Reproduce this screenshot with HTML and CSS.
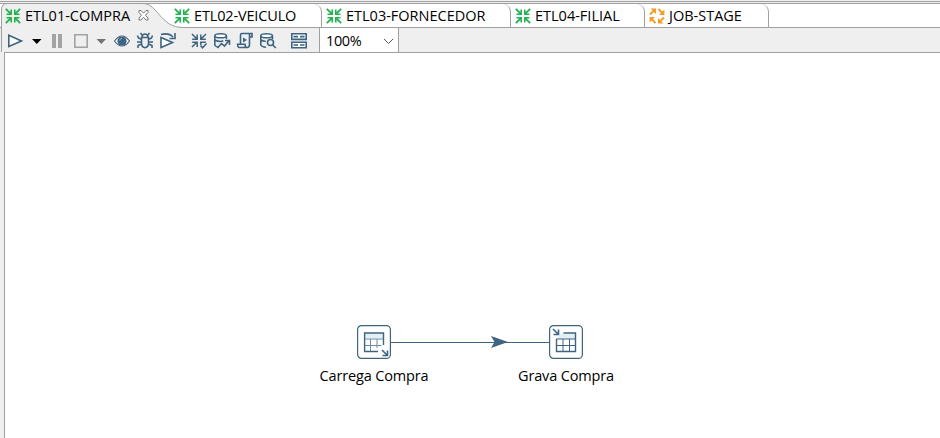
FILE: index.html
```html
<!DOCTYPE html>
<html lang="pt">
<head>
<meta charset="utf-8">
<title>ETL01-COMPRA</title>
<link rel="stylesheet" href="styles.css">
</head>
<body>
<svg class="defs" width="0" height="0">
  <symbol id="transf" viewBox="0 0 16 16">
    <g id="quad"><path d="M.8 .8L5 5" fill="none" stroke="currentColor" stroke-width="1.800"/><path d="M7 1.500V7H1.500V5.400H4L5.400 4V1.500z" fill="currentColor"/></g>
    <use href="#quad" transform="matrix(-1 0 0 1 16 0)"/>
    <use href="#quad" transform="matrix(1 0 0 -1 0 16)"/>
    <use href="#quad" transform="matrix(-1 0 0 -1 16 16)"/>
  </symbol>
  <symbol id="job" viewBox="0 0 16 16">
    <g id="arr"><path d="M1 6.500L5 2.500" fill="none" stroke="currentColor" stroke-width="1.800"/><path d="M1.500 .6H7v5.400L5.200 4.200 3.300 2.300z" fill="currentColor"/></g>
    <use href="#arr" transform="rotate(90 8 8)"/>
    <use href="#arr" transform="rotate(180 8 8)"/>
    <use href="#arr" transform="rotate(270 8 8)"/>
  </symbol>
</svg>
<div class="app">
  <nav class="tabs">
    <div class="tab active">
      <svg class="curve" width="190" height="25" viewBox="0 0 190 25">
        <path d="M1 25V7Q1 .5 7 .5H143C158 .5 160 24.500 183 24.500H190V25z" fill="#efefef"/>
        <path d="M1.500 25V7Q1.500 .5 7 .5H143C158 .5 160 24.500 183 24.500H190" fill="none" stroke="#a0a0a0"/>
      </svg>
      <svg class="ic green"><use href="#transf"/></svg><span class="t1">ETL01-COMPRA</span>
      <svg class="close" width="11" height="11" viewBox="0 0 11 11"><path d="M1 .5h2l2.500 2.700L8 .5h2v2L7.500 5.200 10 8v2H8L5.500 7.300 3 10H1V8l2.500-2.800L1 2.500z" fill="#fff" stroke="#666" stroke-width=".9"/></svg>
    </div>
    <div class="tab w2"><svg class="ic green"><use href="#transf"/></svg><span class="t2">ETL02-VEICULO</span></div>
    <div class="tab w3"><svg class="ic green"><use href="#transf"/></svg><span class="t3">ETL03-FORNECEDOR</span></div>
    <div class="tab w4"><svg class="ic green"><use href="#transf"/></svg><span class="t4">ETL04-FILIAL</span></div>
    <div class="tab w5"><svg class="ic orange"><use href="#job"/></svg><span class="t5">JOB-STAGE</span></div>
  </nav>
  <div class="toolbar">
    <svg class="tools" width="312" height="24" viewBox="0 0 312 24" fill="none" stroke="#3d6480" stroke-width="1.600">
      <path d="M8.800 7.200v11.400L21.500 12.900z" fill="#fff"/>
      <path d="M32 11h9.500l-4.700 5z" fill="#000" stroke="none"/>
      <path d="M52 6h4v14h-4zM58 6h4v14h-4z" fill="#a3a3a3" stroke="none"/>
      <path d="M74.800 6.800h12.400v12.400H74.800z" stroke="#a3a3a3"/>
      <path d="M96.500 11h9.500l-4.700 5z" fill="#737373" stroke="none"/>
      <path d="M114.500 13q7.500-10 15 0-7.500 10-15 0z" fill="#fff" stroke-width="1.200"/>
      <circle cx="122" cy="13" r="4.600" fill="#3d6480" stroke="none"/><path d="M119.700 12.500q.3-2 2.300-2.300" stroke="#9bb4c4" stroke-width="1"/>
      <path d="M141.500 9.500h7V16q-.5 3.500-3.500 3.800-3-.3-3.500-3.800zM142 9q.5-3 3-3t3 3M140.500 5l2 2.500M149.500 5l-2 2.500M137.500 7.500l1 2.500 3 1.500M152.500 7.500l-1 2.500-3 1.500M137 14h4.500M148.500 14h4.500M138 20v-2.500l3.500-1.500M152 20v-2.500l-3.500-1.500"/>
      <path d="M161 9.500v10L172.500 14.500z" fill="#fff"/><path d="M161 6.500q8-2 12 2.500M175 5v5.500h-5.500"/>
      <g stroke-width="1.500"><path d="M192 6l4.500 4.500M197.200 6.500v4.700h-5M206 6l-4.500 4.500M200.800 6.500v4.700h5M192 19l4.500-4.500M197.200 19v-4.700h-5M200.800 17v-2.700h5M200.500 17.500l2 2.300 4-4.300"/></g>
      <path d="M226.400 11V8M214.800 8v9q1 2 3.500 2.200M214.800 12q5 2.500 8.500.8"/><ellipse cx="220.600" cy="7.800" rx="5.800" ry="2" fill="#fff"/>
      <path d="M217.500 20l4-4.500 3 2.500 4.500-5.500M225 12.500h4.500v4.500"/>
      <path d="M240.500 16V7q0-1.500 1.500-1.500h10V9h-2.500M249.500 6v10.500q0 3-2.500 3h-8q-1.500-.5-1.500-3.200h7.500q0 3.200 2 3.200"/><path d="M243 9.500v5l4-2.500z" fill="#3d6480" stroke="none"/>
      <path d="M272.500 11V8M260.800 8v9q1 2 5.200 2.200M260.800 12q2.500 1.500 5 1.200"/><ellipse cx="266.600" cy="7.800" rx="5.800" ry="2" fill="#fff"/>
      <circle cx="270.500" cy="14.500" r="3"/><path d="M272.600 16.800l3.200 3.200"/>
      <path d="M291.800 5.800h14.400v5.600h-14.400zM291.800 14.200h14.400v5.600h-14.400z" fill="#fff"/><path d="M293.500 8.600h4.500M300 8.600h4.500M293.500 17h4.500M300 17h4.500"/>
    </svg>
    <div class="zoom"><span>100%</span><svg width="11" height="7" viewBox="0 0 11 7"><path d="M1 1l4.500 4.500L10 1" fill="none" stroke="#555"/></svg></div>
  </div>
  <main class="canvas">
    <div class="flow">
      <figure class="step s1">
        <svg width="34" height="34" viewBox="0 0 34 34" fill="none" stroke="#3d6480">
          <rect x=".6" y=".6" width="32.800" height="32.800" rx="4" fill="#fff" stroke-width="1.200"/>
          <path d="M7.500 8h19v5h-19z" fill="#e3eef5" stroke="none"/>
          <path d="M13.500 14v12.500M20 14v9M7.500 20.500h17M7.500 14h19" stroke="#6b8da5" stroke-width="1"/>
          <path d="M21 26.500H7.600V8h18.900v12" stroke-width="1.400"/>
          <path d="M25 25l5 5M30.500 25.500v5h-5" stroke-width="1.600"/>
        </svg>
        <figcaption class="c1">Carrega Compra</figcaption>
      </figure>
      <svg class="hop" width="158" height="14" viewBox="0 0 158 14"><path d="M0 7.500h158" stroke="#3d6480" stroke-width="1.100"/><path d="M100 1l17 6-17 6 3.500-6z" fill="#3d6480"/></svg>
      <figure class="step s2">
        <svg width="34" height="34" viewBox="0 0 34 34" fill="none" stroke="#3d6480">
          <rect x=".6" y=".6" width="32.800" height="32.800" rx="4" fill="#fff" stroke-width="1.200"/>
          <path d="M12 8.500h14.500V14h-19z" fill="#e3eef5" stroke="none"/>
          <path d="M7.500 14h19M7.500 20.500h19M14 14v12.500M20.500 14v12.500" stroke-width="1"/>
          <path d="M14.500 8h12v18.500h-19V14" stroke-width="1.400"/>
          <path d="M4 4l5 5M9.500 4.500v5h-5" stroke-width="1.600"/>
        </svg>
        <figcaption class="c2">Grava Compra</figcaption>
      </figure>
    </div>
  </main>
</div>
</body>
</html>
```

FILE: styles.css
```css
* { box-sizing: border-box; }
body { margin: 0; background: #efefef; color: #000; font: 14.5px/20px "Open Sans", "Noto Sans", sans-serif; }
.defs { position: absolute; }
.app { width: 940px; height: 438px; display: flex; flex-direction: column; overflow: hidden; border-top: 1px solid #f0f0f0; }
.tabs { display: flex; height: 27px; padding-top: 2px; border-top: 1px solid #a0a0a0; border-bottom: 1px solid #a0a0a0; background: linear-gradient(#f0f0f0 1px, #a0a0a0 1px, #a0a0a0 2px, #fff 2px); }
.tab { position: relative; display: flex; align-items: center; height: 23px; padding-left: 4px; border-right: 1px solid #a0a0a0; border-top-right-radius: 8px; white-space: nowrap; }
.tab > * { flex: none; }
.tab span { margin-left: 4px; padding-top: 1px; }
.active { width: 168px; border: 0; padding-left: 5px; }
.active span, .active .ic, .active .close { position: relative; }
.curve { position: absolute; left: 0; top: -1px; z-index: 0; }
.ic { width: 16px; height: 16px; }
.green { color: #25b252; }
.orange { color: #f49b20; }
.active .close { margin-left: auto; margin-right: 19px; }
.t2 { letter-spacing: -0.15px; }
.w2 { width: 154px; padding-left: 6px; }
.w3 { width: 189px; }
.w4 { width: 134px; }
.w5 { width: 124px; }
.toolbar { display: flex; height: 24px; border-left: 1px solid #a0a0a0; margin-left: 1px; }
.tools { flex: none; margin-left: -2px; }
.zoom { display: flex; align-items: center; justify-content: space-between; width: 80px; margin-left: 7px; padding: 2px 4px 0 6px; background: #fff; border: 1px solid #a0a0a0; border-width: 0 1px; letter-spacing: -0.4px; }
.canvas { flex: 1; margin-left: 4px; background: #fff; border-top: 1px solid #a0a0a0; border-left: 1px solid #a0a0a0; }
.flow { display: flex; margin: 272px 0 0 352px; }
.step { margin: 0; width: 34px; display: flex; flex-direction: column; align-items: center; }
.step figcaption { margin-top: 7px; white-space: nowrap; letter-spacing: -0.14px; }
.hop { flex: none; margin-top: 10px; }
```
